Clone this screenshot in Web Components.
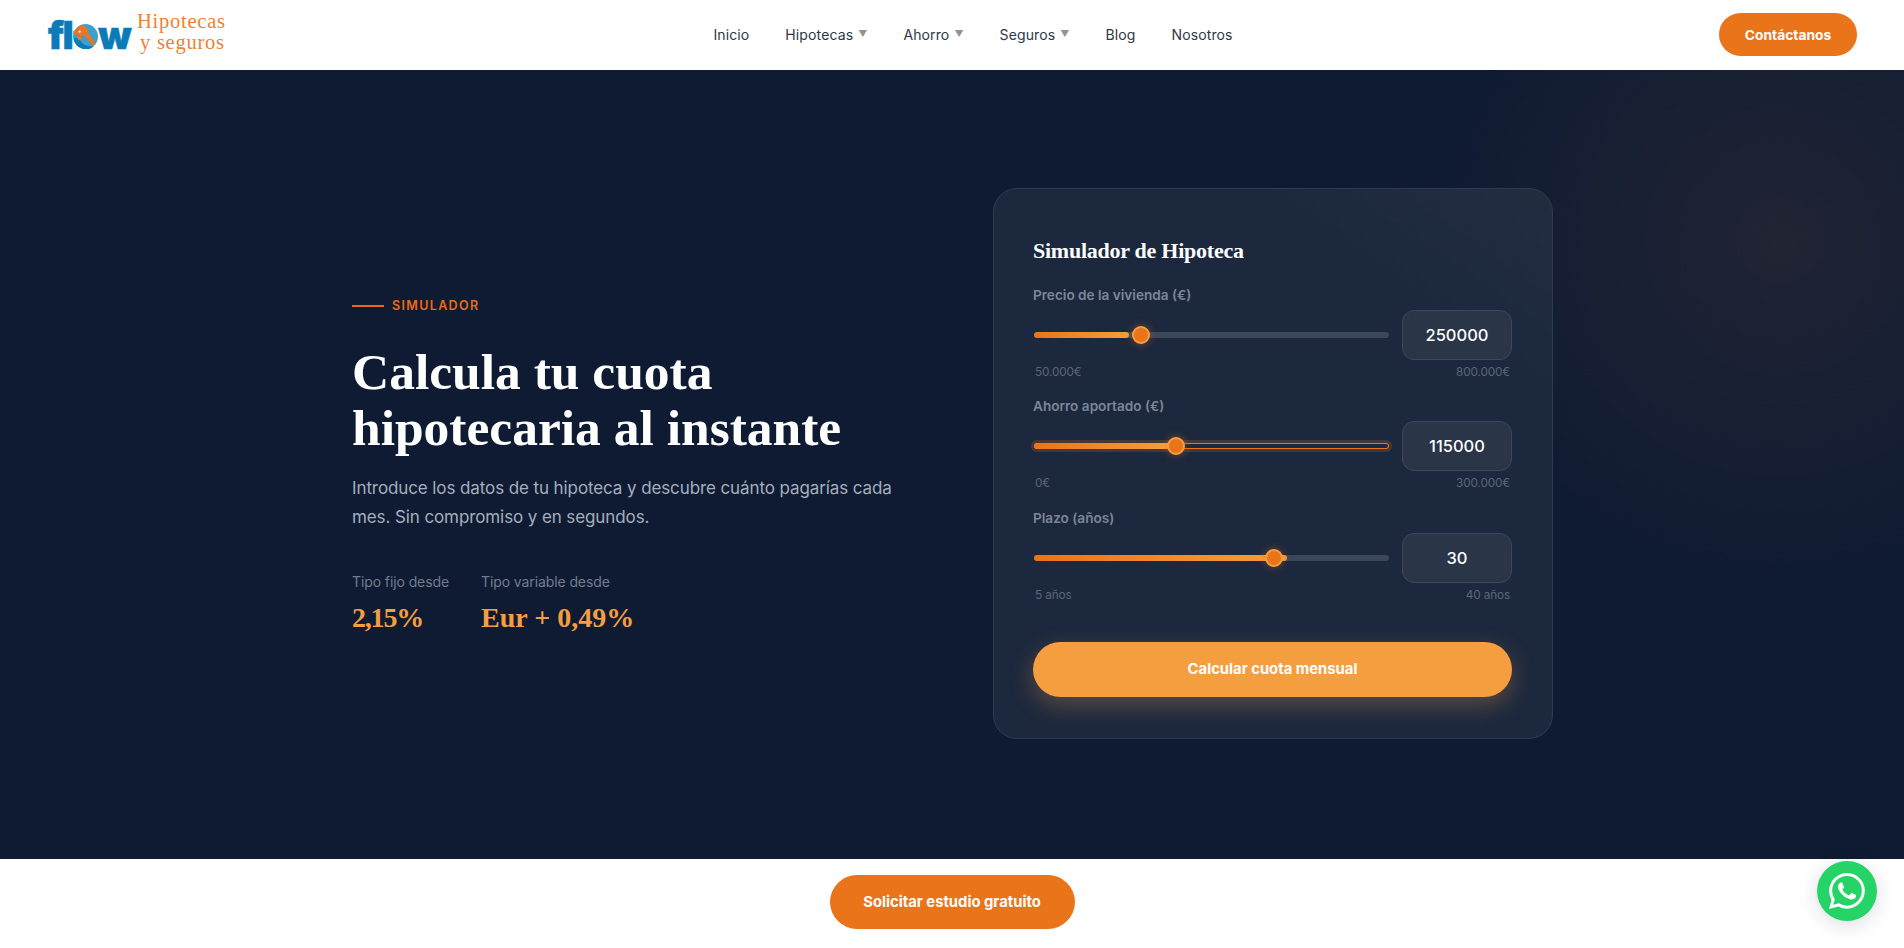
<!DOCTYPE html>
<html lang="es">
<head>
<meta charset="utf-8">
<title>Simulador de Hipoteca</title>
<style>
  html, body { margin: 0; height: 100%; overflow: hidden; background: #fff; }
  body { font-family: Inter, "Liberation Sans", sans-serif; }
</style>
</head>
<body>
<site-header></site-header>
<hero-section>
  <hero-copy slot="copy"></hero-copy>
  <simulator-card slot="card">
    <mortgage-slider label="Precio de la vivienda (€)" value="250000" fill="26.7" thumb="30" min-label="50.000€" max-label="800.000€"></mortgage-slider>
    <mortgage-slider label="Ahorro aportado (€)" value="115000" fill="38.3" thumb="40" min-label="0€" max-label="300.000€" focused></mortgage-slider>
    <mortgage-slider label="Plazo (años)" value="30" fill="71.4" thumb="67.6" min-label="5 años" max-label="40 años"></mortgage-slider>
  </simulator-card>
</hero-section>
<cta-strip></cta-strip>
<whatsapp-fab></whatsapp-fab>

<script>
class BaseElement extends HTMLElement {
  constructor(){
    super()
    this.attachShadow({mode: 'open'})
  }
  connectedCallback(){
    this.shadowRoot.innerHTML = `<style>${this.css}</style>${this.template}`
  }
}

class FlowLogo extends BaseElement {
  get css(){ return /*css*/`
    :host { display: flex; align-items: flex-start; width: 179px; height: 46px; }
    .mark { display: flex; align-items: baseline; height: 46px; width: 85px; font: 900 38px/46px Inter, sans-serif; color: #0b7ab8; letter-spacing: -1.5px; -webkit-text-stroke: .5px #0b7ab8; }
    .mark svg { width: 25px; height: 25px; margin: 0 0 -1px 1px; flex: none; }
    .name { margin: -1px 0 0 4px; font: 20.5px/21px "Liberation Serif", serif; letter-spacing: .75px; color: #ee8033; white-space: nowrap; }
    .name span { display: block; margin-left: 3px; }
  `}
  get template(){ return /*html*/`
    <div class="mark">fl<svg viewBox="0 0 26 26">
      <circle cx="13" cy="13" r="13" fill="#3d9fcc"/>
      <path d="M1 14a12.500 12.500 0 0 0 21 9c-6 1-12-1-15-7z" fill="#0b7ab8"/>
      <path d="M0 8 8 1l4 1 5 6h-2l9 13-4 1-9-11-2 2v4H5v-6H1z" fill="#ea7424"/>
      <rect x="6" y="7" width="2" height="2" fill="#fff"/>
    </svg>w</div>
    <div class="name">Hipotecas<span>y seguros</span></div>
  `}
}
customElements.define('flow-logo', FlowLogo)

class NavLink extends BaseElement {
  get css(){ return /*css*/`
    :host { display: inline-flex; align-items: center; font: 400 14px/20px Inter, sans-serif; color: #2f3746; letter-spacing: .12px; white-space: nowrap; }
    i { font-style: normal; font-size: 9px; line-height: 12px; color: #8d939c; margin: -3px 0 0 5px; }
  `}
  get template(){ return `<slot></slot>${this.hasAttribute('menu') ? '<i>▼</i>' : ''}` }
}
customElements.define('nav-link', NavLink)

class PillButton extends BaseElement {
  get css(){ return /*css*/`
    :host { display: inline-flex; align-items: center; justify-content: center; box-sizing: border-box; border-radius: 999px; background: #ea7419; color: #fff; font: 700 14.8px/20px Inter, sans-serif; white-space: nowrap; }
  `}
  get template(){ return `<slot></slot>` }
}
customElements.define('pill-button', PillButton)

class SiteHeader extends BaseElement {
  get css(){ return /*css*/`
    :host { display: flex; align-items: center; justify-content: space-between; box-sizing: border-box; height: 70px; padding: 0 47px 0 48px; background: #fff; }
    nav { display: flex; align-items: center; gap: 36px; }
    pill-button { width: 138px; height: 43px; margin-top: -1px; font-size: 13.8px; }
  `}
  get template(){ return /*html*/`
    <flow-logo></flow-logo>
    <nav>
      <nav-link>Inicio</nav-link>
      <nav-link menu>Hipotecas</nav-link>
      <nav-link menu>Ahorro</nav-link>
      <nav-link menu>Seguros</nav-link>
      <nav-link>Blog</nav-link>
      <nav-link>Nosotros</nav-link>
    </nav>
    <pill-button>Contáctanos</pill-button>
  `}
}
customElements.define('site-header', SiteHeader)

class HeroSection extends BaseElement {
  get css(){ return /*css*/`
    :host { display: block; height: 789px; background: radial-gradient(circle at 1780px 170px, rgba(120,80,50,.17), rgba(120,80,50,0) 340px), #0f1b33; }
    .grid { display: grid; grid-template-columns: 560px 560px; column-gap: 81px; align-items: center; width: 1201px; margin-left: 352px; padding-top: 118px; }
  `}
  get template(){ return /*html*/`
    <div class="grid"><slot name="copy"></slot><slot name="card"></slot></div>
  `}
}
customElements.define('hero-section', HeroSection)

class HeroCopy extends BaseElement {
  get css(){ return /*css*/`
    :host { display: block; color: #fff; padding-top: 6px; }
    .eyebrow { display: flex; align-items: center; gap: 8px; font: 600 12.5px/16px Inter, sans-serif; letter-spacing: 1.35px; color: #ea6a1c; }
    .eyebrow::before { content: ""; width: 32px; height: 2px; background: #ea6a1c; }
    h1 { margin: 30px 0 0; font: 700 51.5px/56px "Liberation Serif", serif; color: #fff; }
    p { margin: 18px 0 0; width: 545px; font: 400 17px/29px Inter, sans-serif; color: #a5aebc; letter-spacing: -.1px; }
    .stats { display: flex; gap: 32px; margin-top: 40px; }
    .stat span { display: block; font: 400 14px/20px Inter, sans-serif; color: #727c8d; letter-spacing: -.1px; }
    .stat b { display: block; margin-top: 8px; font: 700 28px/36px "Liberation Serif", serif; color: #f59e3f; }
    .stat:first-child b { letter-spacing: -1.2px; }
  `}
  get template(){ return /*html*/`
    <div class="eyebrow">SIMULADOR</div>
    <h1>Calcula tu cuota<br>hipotecaria al instante</h1>
    <p>Introduce los datos de tu hipoteca y descubre cuánto pagarías cada mes. Sin compromiso y en segundos.</p>
    <div class="stats">
      <div class="stat"><span>Tipo fijo desde</span><b>2,15%</b></div>
      <div class="stat"><span>Tipo variable desde</span><b>Eur + 0,49%</b></div>
    </div>
  `}
}
customElements.define('hero-copy', HeroCopy)

class SimulatorCard extends BaseElement {
  get css(){ return /*css*/`
    :host { display: block; box-sizing: border-box; height: 551px; padding: 46px 40px 0 39px; border: 1px solid #2e3a50; border-radius: 24px; background: linear-gradient(215deg, #222d40 0, #1c283e 22%); }
    h2 { margin: 0 0 19px; font: 700 22px/32px "Liberation Serif", serif; letter-spacing: -.25px; color: #fff; }
    .btn { display: block; margin-top: 41px; }
    pill-button { display: flex; height: 55px; background: #f59e3f; box-shadow: 0 8px 24px rgba(245,158,63,.3); }
  `}
  get template(){ return /*html*/`
    <h2>Simulador de Hipoteca</h2>
    <slot></slot>
    <div class="btn"><pill-button>Calcular cuota mensual</pill-button></div>
  `}
}
customElements.define('simulator-card', SimulatorCard)

class MortgageSlider extends BaseElement {
  get css(){ return /*css*/`
    :host { display: block; height: 111.4px; }
    :host(:last-of-type) { height: 92px; }
    label { display: block; font: 600 13.6px/18px Inter, sans-serif; color: #7d8696; }
    .row { display: flex; align-items: center; gap: 12px; margin-top: 6px; }
    .range { position: relative; flex: 1; height: 6px; margin: 0 1px; border-radius: 3px; background: #3c475b; }
    .fill { height: 100%; border-radius: 3px; background: linear-gradient(90deg, #ea7419, #f59e3f); }
    .thumb { position: absolute; top: 50%; width: 14px; height: 14px; margin: -9px 0 0 -9px; border: 2px solid #f59e3f; border-radius: 50%; background: #ea7419; box-shadow: 0 0 8px rgba(234,116,25,.45); }
    :host([focused]) .range { background: #1c283e; box-shadow: inset 0 0 0 1px #ea7419, 0 0 0 3px rgba(234,116,25,.2); }
    output { display: flex; align-items: center; justify-content: center; box-sizing: border-box; width: 110px; height: 50px; border: 1px solid #3c475b; border-radius: 12px; background: #2a3548; font: 500 16.5px/20px Inter, sans-serif; color: #fff; }
    .limits { display: flex; justify-content: space-between; box-sizing: border-box; padding: 0 2px; margin-top: 4px; font: 400 11.8px/16px Inter, sans-serif; color: #5b6577; letter-spacing: -.15px; }
  `}
  get template(){
    const attr = name => this.getAttribute(name)
    return /*html*/`
      <label>${attr('label')}</label>
      <div class="row">
        <div class="range">
          <div class="fill" style="width:${attr('fill')}%"></div>
          <div class="thumb" style="left:${attr('thumb')}%"></div>
        </div>
        <output>${attr('value')}</output>
      </div>
      <div class="limits"><span>${attr('min-label')}</span><span>${attr('max-label')}</span></div>
    `
  }
}
customElements.define('mortgage-slider', MortgageSlider)

class CtaStrip extends BaseElement {
  get css(){ return /*css*/`
    :host { display: flex; justify-content: center; box-sizing: border-box; height: 89px; padding-top: 16px; background: #fff; }
    pill-button { width: 245px; height: 54px; }
  `}
  get template(){ return `<pill-button>Solicitar estudio gratuito</pill-button>` }
}
customElements.define('cta-strip', CtaStrip)

class WhatsappFab extends BaseElement {
  get css(){ return /*css*/`
    :host { position: fixed; right: 27px; bottom: 27px; display: flex; align-items: center; justify-content: center; width: 60px; height: 60px; border-radius: 50%; background: #25d366; box-shadow: 0 4px 20px rgba(15,27,51,.15); }
    svg { width: 36px; height: 36px; fill: #fff; }
  `}
  get template(){ return /*html*/`
    <svg viewBox="0 0 16 16"><path d="M13.601 2.326A7.854 7.854 0 0 0 7.994 0C3.627 0 .068 3.558.064 7.926c0 1.399.366 2.76 1.057 3.965L0 16l4.204-1.102a7.933 7.933 0 0 0 3.79.965h.004c4.368 0 7.926-3.558 7.93-7.93A7.898 7.898 0 0 0 13.6 2.326zM7.994 14.521a6.573 6.573 0 0 1-3.356-.92l-.24-.144-2.494.654.666-2.433-.156-.251a6.56 6.56 0 0 1-1.007-3.505c0-3.626 2.957-6.584 6.591-6.584a6.56 6.56 0 0 1 4.66 1.931 6.557 6.557 0 0 1 1.928 4.66c-.004 3.639-2.961 6.592-6.592 6.592zm3.615-4.934c-.197-.099-1.17-.578-1.353-.646-.182-.065-.315-.099-.445.099-.133.197-.513.646-.627.775-.114.133-.232.148-.43.05-.197-.1-.836-.308-1.592-.985-.59-.525-.985-1.175-1.103-1.372-.114-.198-.011-.304.088-.403.087-.088.197-.232.296-.346.1-.114.133-.198.198-.33.065-.134.034-.248-.015-.347-.05-.099-.445-1.076-.612-1.47-.16-.389-.323-.335-.445-.34-.114-.007-.247-.007-.38-.007a.729.729 0 0 0-.529.247c-.182.198-.691.677-.691 1.654 0 .977.71 1.916.81 2.049.098.133 1.394 2.132 3.383 2.992.47.205.84.326 1.129.418.475.152.904.129 1.246.08.38-.058 1.171-.48 1.338-.943.164-.464.164-.86.114-.943-.049-.084-.182-.133-.38-.232z"/></svg>
  `}
}
customElements.define('whatsapp-fab', WhatsappFab)
</script>
</body>
</html>
